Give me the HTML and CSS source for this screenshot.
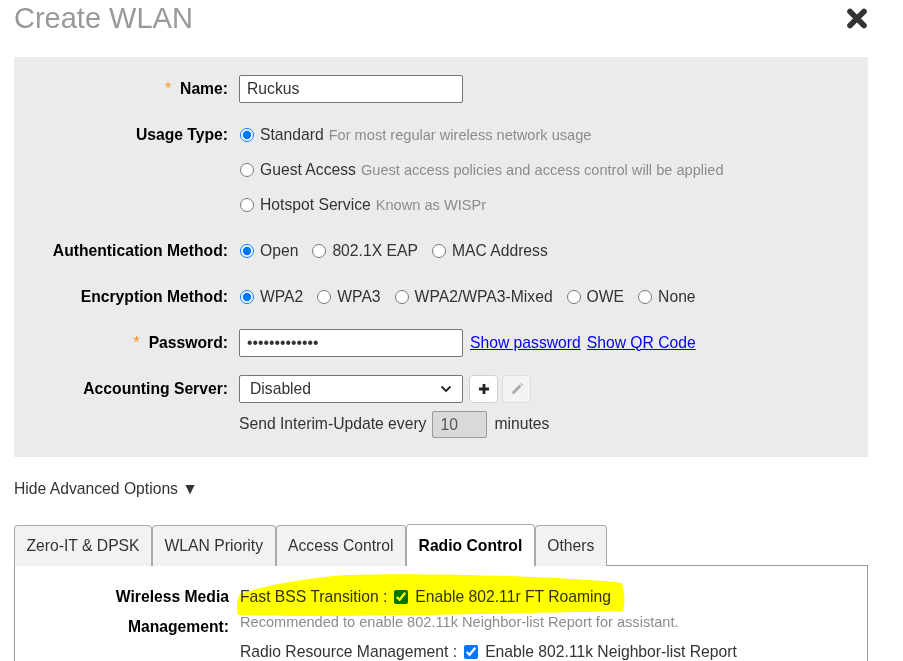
FILE: index.html
```html
<!DOCTYPE html>
<html lang="en">
<head>
    <meta charset="UTF-8">
    <meta name="viewport" content="width=device-width, initial-scale=1.0">
    <title>Create WLAN</title>
    <link rel="stylesheet" href="styles.css">
</head>
<body>
    <div class="dialog">
        <div class="dialog-head">
            <h1 class="dialog-title">Create WLAN</h1>
            <button class="close-btn" title="Close">
                <svg width="22" height="21" viewBox="0 0 22 21">
                    <path d="M4 3.5 L18 17.5 M18 3.5 L4 17.5" stroke="#333" stroke-width="5.6" stroke-linecap="round"/>
                </svg>
            </button>
        </div>

        <div class="form-panel">
            <div class="form-row">
                <label class="form-label"><span class="req">*</span>Name:</label>
                <div class="form-field">
                    <div class="form-line"><input class="text-input" type="text" value="Ruckus"></div>
                </div>
            </div>

            <div class="form-row">
                <label class="form-label">Usage Type:</label>
                <div class="form-field">
                    <div class="form-line">
                        <label class="opt"><input type="radio" name="usage" checked>Standard <span class="hint">For most regular wireless network usage</span></label>
                    </div>
                    <div class="form-line">
                        <label class="opt"><input type="radio" name="usage">Guest Access <span class="hint">Guest access policies and access control will be applied</span></label>
                    </div>
                    <div class="form-line">
                        <label class="opt"><input type="radio" name="usage">Hotspot Service <span class="hint">Known as WISPr</span></label>
                    </div>
                </div>
            </div>

            <div class="form-row">
                <label class="form-label">Authentication Method:</label>
                <div class="form-field">
                    <div class="form-line">
                        <label class="opt"><input type="radio" name="auth" checked>Open</label>
                        <label class="opt"><input type="radio" name="auth">802.1X EAP</label>
                        <label class="opt"><input type="radio" name="auth">MAC Address</label>
                    </div>
                </div>
            </div>

            <div class="form-row">
                <label class="form-label">Encryption Method:</label>
                <div class="form-field">
                    <div class="form-line">
                        <label class="opt"><input type="radio" name="enc" checked>WPA2</label>
                        <label class="opt"><input type="radio" name="enc">WPA3</label>
                        <label class="opt"><input type="radio" name="enc">WPA2/WPA3-Mixed</label>
                        <label class="opt"><input type="radio" name="enc">OWE</label>
                        <label class="opt"><input type="radio" name="enc">None</label>
                    </div>
                </div>
            </div>

            <div class="form-row">
                <label class="form-label"><span class="req">*</span>Password:</label>
                <div class="form-field">
                    <div class="form-line">
                        <input class="text-input" type="password" value="ruckus1234567">
                        <a class="link" href="#">Show password</a>
                        <a class="link" href="#">Show QR Code</a>
                    </div>
                </div>
            </div>

            <div class="form-row">
                <label class="form-label">Accounting Server:</label>
                <div class="form-field">
                    <div class="form-line">
                        <div class="select-wrap">
                            <select class="select-input">
                                <option>Disabled</option>
                            </select>
                            <svg class="select-arrow" width="12" height="8" viewBox="0 0 12 8">
                                <path d="M1.5 1.5 L6 6 L10.5 1.5" fill="none" stroke="#222" stroke-width="1.8"/>
                            </svg>
                        </div>
                        <button class="icon-btn" title="Add">
                            <svg width="14" height="14" viewBox="0 0 14 14">
                                <path d="M7 2 V12 M2 7 H12" stroke="#222" stroke-width="2.8"/>
                            </svg>
                        </button>
                        <button class="icon-btn disabled" title="Edit">
                            <svg width="14" height="14" viewBox="0 0 14 14">
                                <path d="M2 12 L2.6 9.4 L9.4 2.6 L11.4 4.6 L4.6 11.4 Z" fill="#a8a8a8"/>
                                <path d="M10.2 1.8 L11 1 L13 3 L12.2 3.8 Z" fill="#a8a8a8"/>
                            </svg>
                        </button>
                    </div>
                    <div class="text-line">Send Interim-Update every<input class="num-input" type="text" value="10">minutes</div>
                </div>
            </div>
        </div>

        <div class="adv-toggle">Hide Advanced Options &#9660;</div>

        <div class="tabs">
            <div class="tab">Zero-IT &amp; DPSK</div>
            <div class="tab">WLAN Priority</div>
            <div class="tab">Access Control</div>
            <div class="tab active">Radio Control</div>
            <div class="tab">Others</div>
        </div>

        <div class="tab-body">
            <div class="form-row">
                <label class="form-label tall">Wireless Media Management:</label>
                <div class="form-field">
                    <div class="tab-line">Fast BSS Transition :<input class="check" type="checkbox" checked>Enable 802.11r FT Roaming</div>
                    <div class="tab-line small"><span class="hint">Recommended to enable 802.11k Neighbor-list Report for assistant.</span></div>
                    <div class="tab-line">Radio Resource Management :<input class="check" type="checkbox" checked>Enable 802.11k Neighbor-list Report</div>
                </div>
            </div>

            <!-- marker highlight drawn over the first option -->
            <svg class="marker" width="392" height="46" viewBox="0 0 392 46">
                <path d="M2 42 C0 34 1 26 4 21 C30 12 70 5 110 2 C170 0 260 2 320 5 C350 7 375 8 386 10 C389 20 389 30 387 38 C300 40 200 42 100 43 C60 43 25 43 2 42 Z" fill="#ffff00"/>
            </svg>
        </div>
    </div>
</body>
</html>
```

FILE: styles.css
```css
* {
    box-sizing: border-box;
}

body {
    margin: 0;
    font-family: "Liberation Sans", Arial, sans-serif;
    font-size: 15.7px;
    color: #333;
    background: #fff;
}

.dialog {
    width: 854px;
    margin-left: 14px;
}

.dialog-head {
    display: flex;
    justify-content: space-between;
    align-items: flex-start;
    height: 57px;
}

.dialog-title {
    margin: 0;
    padding-top: 2px;
    font-size: 29px;
    font-weight: normal;
    line-height: 33px;
    color: #999;
}

.close-btn {
    margin-top: 8px;
    padding: 0;
    border: none;
    background: none;
    display: flex;
    cursor: pointer;
}

.form-panel {
    background: #ebebeb;
    padding: 14px 0 16px;
    display: flex;
    flex-direction: column;
    gap: 11px;
}

.form-row {
    display: grid;
    grid-template-columns: 214px 1fr;
    column-gap: 11px;
}

.form-label {
    text-align: right;
    font-weight: bold;
    color: #000;
    line-height: 35px;
}

.req {
    color: #f7941d;
    font-weight: normal;
    margin-right: 9px;
}

.form-line {
    display: flex;
    align-items: center;
    height: 35px;
}

.text-line {
    height: 35px;
    line-height: 35px;
}

.opt {
    display: flex;
    align-items: center;
    margin-right: 13px;
    white-space: nowrap;
}

input[type="radio"] {
    width: 14px;
    height: 14px;
    margin: 0 6px 0 1px;
}

.opt .hint {
    margin-left: 5px;
}

.hint {
    color: #8c8c8c;
    font-size: 14.6px;
}

.text-input,
.select-input {
    width: 224px;
    height: 28px;
    border: 1px solid #767676;
    border-radius: 2px;
    padding: 0 7px;
    font: inherit;
    color: #333;
    background: #fff;
}

.select-wrap {
    position: relative;
    display: flex;
}

.select-input {
    appearance: none;
    padding-left: 10px;
}

.select-arrow {
    position: absolute;
    right: 11px;
    top: 10px;
    pointer-events: none;
}

.link {
    color: #0000ee;
    text-decoration: underline;
    margin-left: 7px;
}

.link + .link {
    margin-left: 6px;
}

.icon-btn {
    width: 29px;
    height: 28px;
    margin-left: 6px;
    padding: 0;
    border: 1px solid #d0d0d0;
    border-radius: 4px;
    background: #fff;
    display: flex;
    align-items: center;
    justify-content: center;
}

.icon-btn + .icon-btn {
    margin-left: 4px;
}

.icon-btn.disabled {
    background: #f3f3f3;
    border-color: #dcdcdc;
}

.num-input {
    width: 55px;
    height: 27px;
    margin: 0 7px 0 6px;
    padding: 0 7px;
    border: 1px solid #9a9a9a;
    border-radius: 2px;
    background: #d9d9d9;
    font: inherit;
    color: #555;
    vertical-align: middle;
}

.adv-toggle {
    margin-top: 22px;
    line-height: 20px;
    color: #333;
}

.tabs {
    display: flex;
    align-items: flex-end;
    margin-top: 25px;
    margin-bottom: -1px;
    position: relative;
    z-index: 1;
}

.tab {
    height: 41px;
    padding: 0 11.5px;
    border: 1px solid #aaa;
    border-bottom: none;
    border-radius: 4px 4px 0 0;
    background: #f2f2f2;
    display: flex;
    align-items: center;
    color: #333;
}

.tab.active {
    height: 42px;
    background: #fff;
    font-weight: bold;
    color: #000;
}

.tab-body {
    position: relative;
    height: 120px;
    padding-top: 16px;
    border: 1px solid #999;
}

.form-label.tall {
    line-height: 30px;
}

.tab-line {
    height: 30px;
    line-height: 30px;
    white-space: nowrap;
}

.tab-line.small {
    height: 20px;
    line-height: 20px;
    margin-bottom: 5px;
}

.check {
    width: 14px;
    height: 14px;
    margin: 0 7px 0 7px;
    vertical-align: -2px;
}

.marker {
    position: absolute;
    left: 221px;
    top: 7px;
    mix-blend-mode: multiply;
    pointer-events: none;
}
```
